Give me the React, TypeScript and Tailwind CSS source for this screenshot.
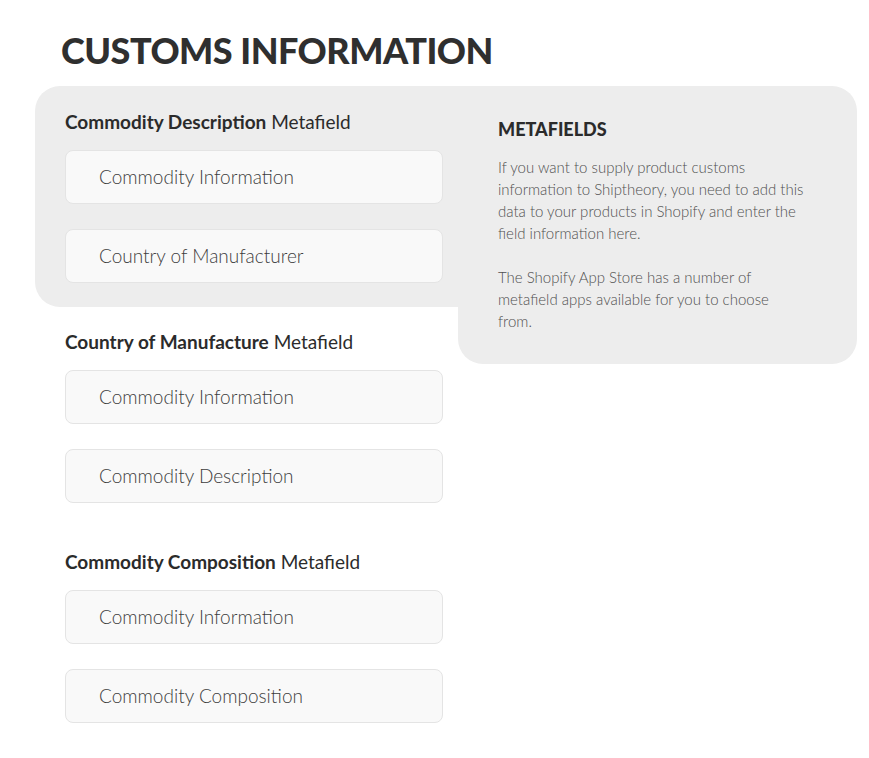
const fieldGroups = [
  {
    bold: 'Commodity Description',
    fields: ['Commodity Information', 'Country of Manufacturer'],
  },
  {
    bold: 'Country of Manufacture',
    fields: ['Commodity Information', 'Commodity Description'],
  },
  {
    bold: 'Commodity Composition',
    fields: ['Commodity Information', 'Commodity Composition'],
  },
];

function FieldLabel({ bold }: { bold: string }) {
  return (
    <div className="mb-4 text-[19px] leading-[24px] text-[#2b2b2b]">
      <span className="font-bold">{bold}</span> <span className="font-normal">Metafield</span>
    </div>
  );
}

function FakeInput({ value }: { value: string }) {
  return (
    <div className="flex h-[54px] w-[378px] items-center rounded-[8px] border border-[#e4e4e4] bg-[#f9f9f9] pl-[33px] text-[19px] font-light leading-[24px] text-[#3d3d3d]">
      {value}
    </div>
  );
}

function FieldGroup({ bold, fields }: { bold: string; fields: string[] }) {
  return (
    <div>
      <FieldLabel bold={bold} />
      <div className="flex flex-col gap-[25px]">
        {fields.map((f) => (
          <FakeInput key={f} value={f} />
        ))}
      </div>
    </div>
  );
}

export default function App() {
  const [first, second, third] = fieldGroups;
  return (
    <div
      className="min-h-[758px] w-[869px] bg-white pl-[35px] pt-[28px]"
      style={{ fontFamily: 'Lato, "Open Sans", sans-serif' }}
    >
      <h1 className="mb-[14px] pl-[26px] text-[36px] font-black leading-[44px] tracking-[-0.5px] text-[#2f2f2f]">
        CUSTOMS INFORMATION
      </h1>

      <div className="flex items-start">
        {/* left column */}
        <div className="w-[423px]">
          <div className="rounded-l-[25px] bg-[#ededed] pb-[24px] pl-[30px] pt-[24px]">
            <FieldGroup {...first} />
          </div>
          <div className="pl-[30px] pt-[23px]">
            <FieldGroup {...second} />
          </div>
          <div className="pl-[30px] pt-[47px]">
            <FieldGroup {...third} />
          </div>
        </div>

        {/* sidebar */}
        <div className="w-[399px] rounded-b-[25px] rounded-tr-[25px] bg-[#ededed] pb-[32px] pl-[40px] pr-[30px] pt-[32px]">
          <h2 className="text-[18px] font-black leading-[22px] text-[#2b2b2b]">METAFIELDS</h2>
          <p className="mt-[16px] text-[15px] font-light leading-[22px] text-[#505050]">
            If you want to supply product customs
            <br />
            information to Shiptheory, you need to add this
            <br />
            data to your products in Shopify and enter the
            <br />
            field information here.
          </p>
          <p className="mt-[22px] text-[15px] font-light leading-[22px] text-[#505050]">
            The Shopify App Store has a number of
            <br />
            metafield apps available for you to choose
            <br />
            from.
          </p>
        </div>
      </div>
    </div>
  );
}
